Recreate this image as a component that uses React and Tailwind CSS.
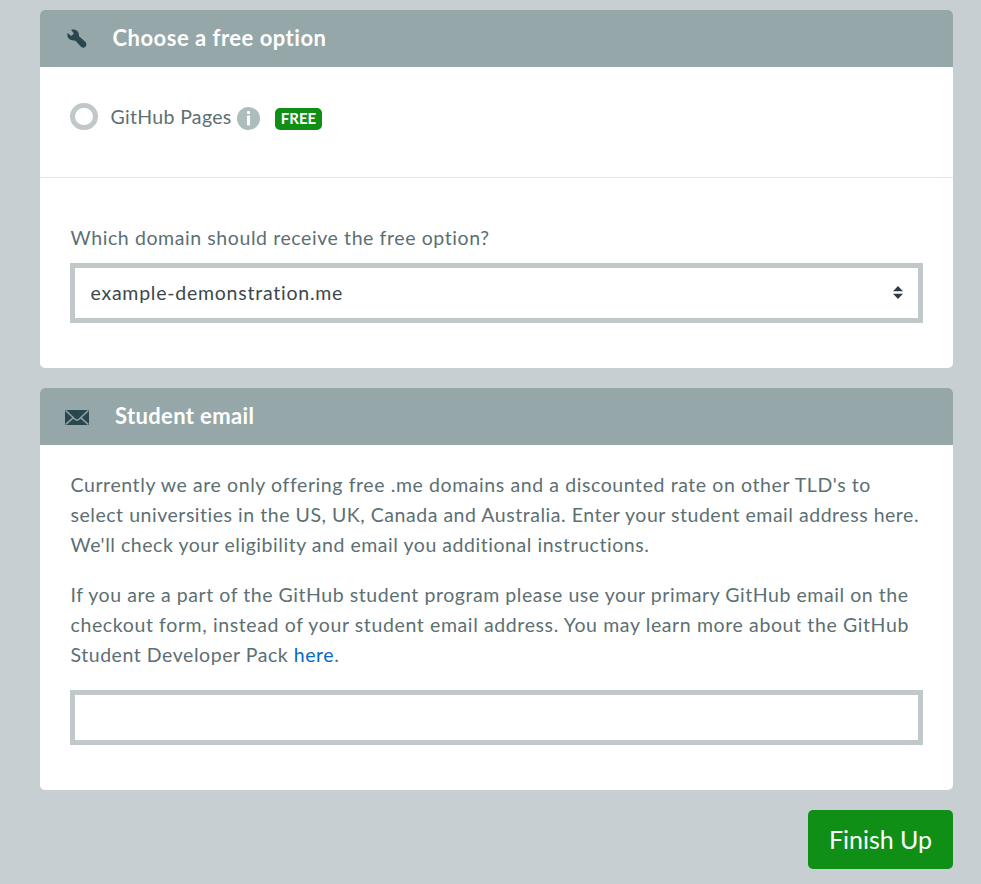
import { useState } from "react";

const INTRO = [
  { text: "Currently we are only offering free .me domains and a discounted rate on other TLD's to", cls: "tracking-[0.59px]" },
  { text: "select universities in the US, UK, Canada and Australia. Enter your student email address here.", cls: "tracking-[0.53px]" },
  { text: "We'll check your eligibility and email you additional instructions.", cls: "tracking-[0.54px]" },
];

const PROGRAM = [
  { text: "If you are a part of the GitHub student program please use your primary GitHub email on the", cls: "tracking-[0.55px]" },
  { text: "checkout form, instead of your student email address. You may learn more about the GitHub", cls: "tracking-[0.615px]" },
];

function WrenchIcon() {
  return (
    <svg width="20" height="20" viewBox="0 0 20 20" className="block">
      <path
        d="M.7 4 L4.2 6.9 L6.9 4.4 L4.2 1.1 C7.6 -.5 12.2 2 11.9 6.4 C11.9 6.9 12.1 7.3 12.6 7.7 L18.3 12.7 C21.3 15.7 17.6 20.6 14.3 18.1 L9.1 12.5 C8.5 11.7 7.9 11.4 6.9 11.4 C2.9 11.7 -.9 8.4 .7 4 Z"
        fill="#2a474f"
      />
    </svg>
  );
}

function MailIcon() {
  return (
    <svg width="24" height="15" viewBox="0 0 24 15" className="block">
      <rect width="24" height="15" rx="1" fill="#2a474f" />
      <path d="M.8 .6 L10 9.2 Q12 11 14 9.2 L23.2 .6 M.8 14.4 L8.4 7.6 M23.2 14.4 L15.6 7.6" fill="none" stroke="#8fa3a5" strokeWidth="1.5" />
    </svg>
  );
}

function InfoIcon() {
  return (
    <svg width="23" height="23" viewBox="0 0 23 23" className="block">
      <circle cx="11.5" cy="11.5" r="11.5" fill="#afbcbe" />
      <rect x="10" y="4" width="3" height="3" rx="1" fill="#fff" />
      <rect x="10" y="8.5" width="3" height="10" rx="1" fill="#fff" />
    </svg>
  );
}

function Card({ icon, title, children }) {
  return (
    <section className="overflow-hidden rounded-[5px] bg-white">
      <header className="flex h-[57px] items-center bg-[#95a7a8] pl-[25px]">
        {icon}
        {title}
      </header>
      {children}
    </section>
  );
}

export default function App() {
  const [selected, setSelected] = useState(false);
  const [email, setEmail] = useState("");

  return (
    <main className="flex h-[884px] flex-col gap-5 overflow-hidden bg-[#c7cfd2] pt-[10px] pr-7 pl-10 font-['Lato',sans-serif] text-[19.5px] leading-[30px] text-[#5c6f73]">
      <Card
        icon={<span className="ml-[2px] w-[45.5px]"><WrenchIcon /></span>}
        title={<h2 className="pb-[2px] text-[22px] font-bold tracking-[0.5px] whitespace-nowrap text-white">Choose a free option</h2>}
      >
        <div className="flex h-[111px] items-start border-b border-[#e3e7e8] pt-9 pl-[30px]">
          <button
            type="button"
            role="radio"
            aria-checked={selected}
            aria-label="GitHub Pages"
            onClick={() => setSelected(!selected)}
            className="h-[27px] w-7 shrink-0 rounded-full border-5 border-[#c1c8ca] bg-white"
          />
          <span className="-mt-px ml-[12.5px] w-[126.5px] tracking-[0.33px] whitespace-nowrap">GitHub Pages</span>
          <span className="mt-1"><InfoIcon /></span>
          <span className="mt-[5px] ml-[15px] flex h-[22px] w-[47px] items-center justify-center rounded-[5px] bg-[#0f8f15] pb-[2px] text-[15px] font-bold text-white">FREE</span>
        </div>
        <div className="h-[190px] px-[30px] pt-[45px]">
          <label className="block pl-[0.5px] tracking-[0.59px] whitespace-nowrap">Which domain should receive the free option?</label>
          <div className="mt-[10px] flex h-[60px] items-center justify-between border-5 border-[#c1c8ca] pr-[15px] pl-[15.5px] text-[#3c474d]">
            <span className="tracking-[0.76px]">example-demonstration.me</span>
            <svg width="10" height="13" viewBox="0 0 10 13" className="mb-px block">
              <path d="M0 5.3 L5 0 L10 5.3 Z M0 7.7 L5 13 L10 7.7 Z" fill="#303b43" />
            </svg>
          </div>
        </div>
      </Card>

      <Card
        icon={<span className="w-[50px] pt-[2px]"><MailIcon /></span>}
        title={<h2 className="pb-[2px] text-[22px] font-bold tracking-[0.36px] whitespace-nowrap text-white">Student email</h2>}
      >
        <div className="h-[345px] px-[30px] pt-[25px]">
          <p className="pl-[0.5px] whitespace-nowrap">
            {INTRO.map((l) => (
              <span key={l.text} className="block"><span className={l.cls}>{l.text}</span></span>
            ))}
          </p>
          <p className="mt-5 pl-[0.5px] whitespace-nowrap">
            {PROGRAM.map((l) => (
              <span key={l.text} className="block"><span className={l.cls}>{l.text}</span></span>
            ))}
            <span className="block tracking-[0.55px]">
              Student Developer Pack <a href="#" className="text-[#0668cc]">here</a>.
            </span>
          </p>
          <input
            type="email"
            value={email}
            onChange={(e) => setEmail(e.target.value)}
            className="mt-5 block h-[55px] w-full border-5 border-[#c1c8ca] bg-white px-[15px] outline-none"
          />
        </div>
      </Card>

      <button type="button" className="flex h-[59px] w-[145px] items-center justify-center self-end rounded-[5px] bg-[#0f8f15] pb-[2px] text-[25px] text-white">
        Finish Up
      </button>
    </main>
  );
}
